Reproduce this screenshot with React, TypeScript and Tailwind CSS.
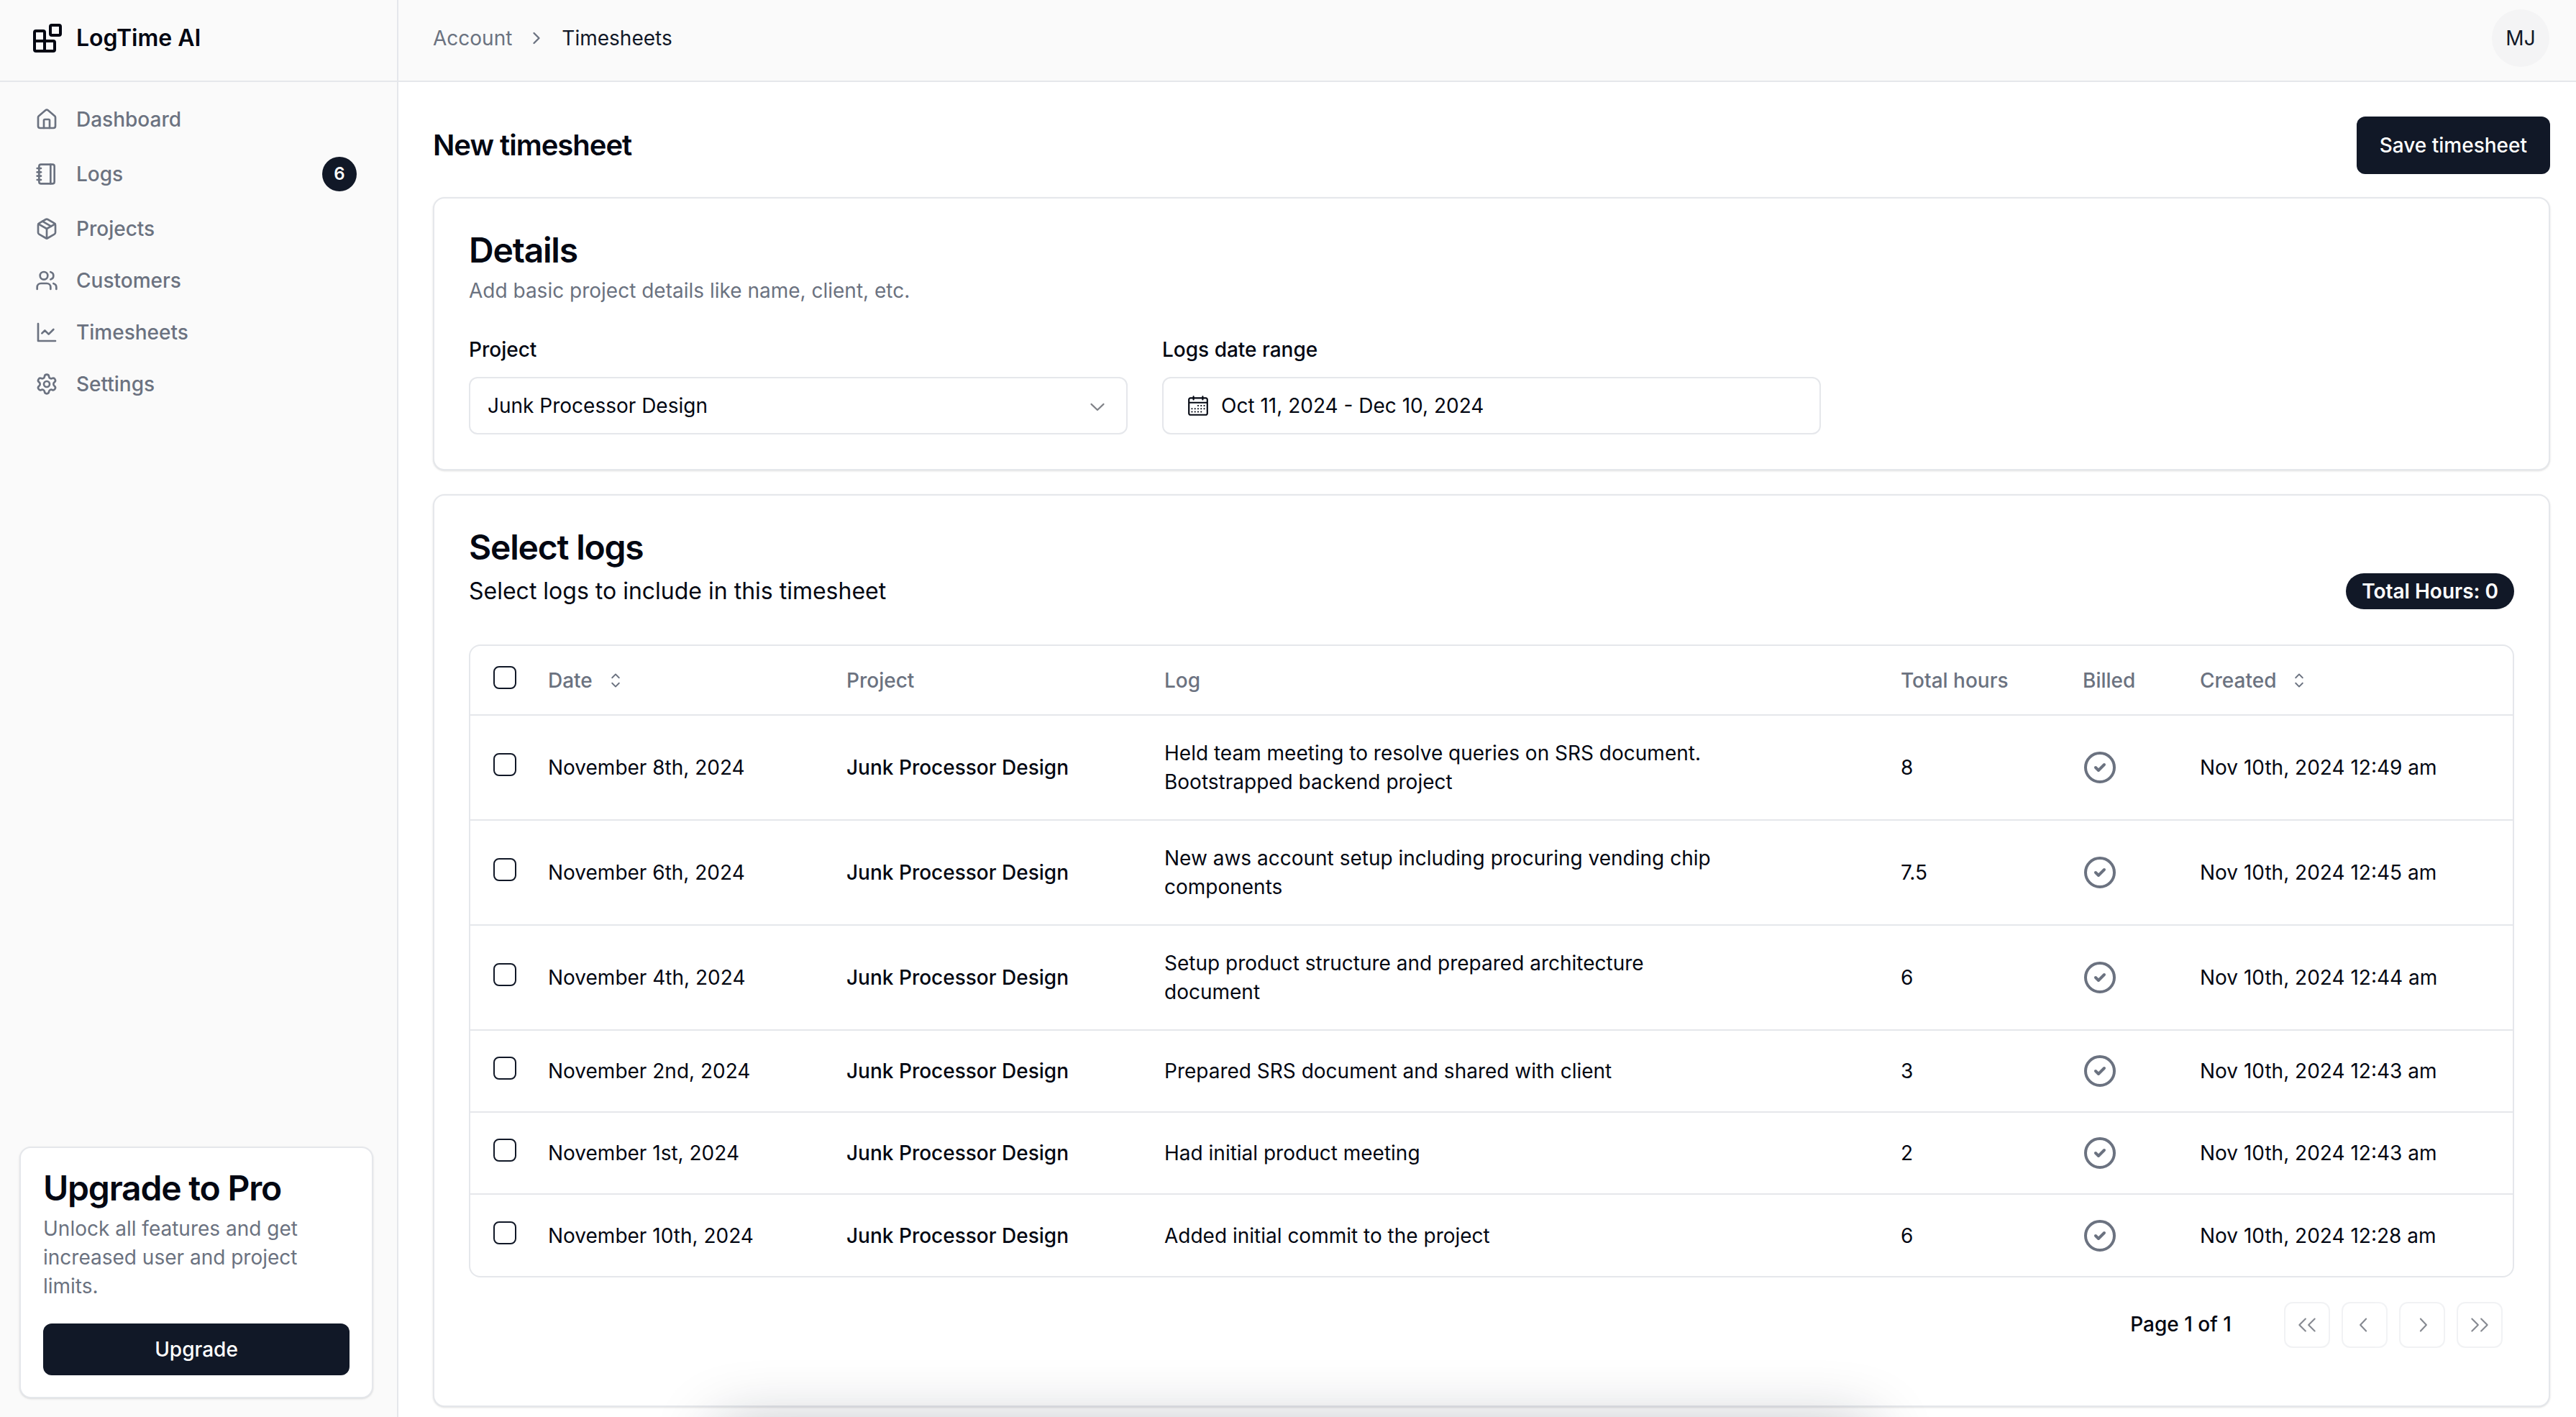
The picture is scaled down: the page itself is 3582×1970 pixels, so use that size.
import { ChevronRight, CircleCheck, House, Notebook, Package, Settings, Users } from 'lucide-react'
import { RxCalendar, RxCaretSort, RxChevronDown, RxChevronLeft, RxChevronRight, RxDoubleArrowLeft, RxDoubleArrowRight } from 'react-icons/rx'
import type { ReactNode } from 'react'

interface LogRow { date: string; log: ReactNode; hours: string; created: string; tall?: boolean }

const LOGS: LogRow[] = [
  { date: 'November 8th, 2024', log: 'Held team meeting to resolve queries on SRS document. Bootstrapped backend project', hours: '8', created: 'Nov 10th, 2024 12:49 am', tall: true },
  { date: 'November 6th, 2024', log: 'New aws account setup including procuring vending chip components', hours: '7.5', created: 'Nov 10th, 2024 12:45 am', tall: true },
  { date: 'November 4th, 2024', log: 'Setup product structure and prepared architecture document', hours: '6', created: 'Nov 10th, 2024 12:44 am', tall: true },
  { date: 'November 2nd, 2024', log: 'Prepared SRS document and shared with client', hours: '3', created: 'Nov 10th, 2024 12:43 am' },
  { date: 'November 1st, 2024', log: 'Had initial product meeting', hours: '2', created: 'Nov 10th, 2024 12:43 am' },
  { date: 'November 10th, 2024', log: 'Added initial commit to the project', hours: '6', created: 'Nov 10th, 2024 12:28 am' },
]

function BlocksLogo() {
  return (
    <svg width="48" height="48" viewBox="0 0 24 24" fill="none" stroke="currentColor" strokeWidth="2" strokeLinecap="round" strokeLinejoin="round">
      <rect x="14" y="3" width="7" height="7" rx="1" />
      <path d="M10 21V8a1 1 0 0 0-1-1H4a1 1 0 0 0-1 1v12a1 1 0 0 0 1 1h12a1 1 0 0 0 1-1v-5a1 1 0 0 0-1-1H3" />
    </svg>
  )
}

function LineChartIcon() {
  return (
    <svg width="32" height="32" viewBox="0 0 24 24" fill="none" stroke="currentColor" strokeWidth="2" strokeLinecap="round" strokeLinejoin="round">
      <path d="M3 3v18h18" />
      <path d="m19 9-5 5-4-4-3 3" />
    </svg>
  )
}

function Checkbox() {
  return <span role="checkbox" aria-checked="false" className="mb-[8px] block h-[32px] w-[32px] rounded-[8px] border-2 border-[#111827] bg-white" />
}

function PageButton({ children }: { children: ReactNode }) {
  return (
    <div className="flex h-[64px] w-[64px] items-center justify-center rounded-[12px] border-2 border-[#e5e7eb] text-[#111827] opacity-50">
      {children}
    </div>
  )
}

function NavItem({ icon, label, badge }: { icon: ReactNode; label: string; badge?: string }) {
  return (
    <div className={`flex items-center gap-[25px] pl-[49px] pr-[56px] text-[28px] font-medium text-[#6b7280] ${badge ? 'h-[80px]' : 'h-[72px]'}`}>
      {icon}
      <span>{label}</span>
      {badge && (
        <span className="ml-auto flex h-[48px] w-[48px] items-center justify-center rounded-full bg-[#111827] text-[24px] font-semibold text-white">{badge}</span>
      )}
    </div>
  )
}

export default function App() {
  return (
    <div className="relative flex h-screen overflow-hidden bg-white font-['Inter',sans-serif] text-[#030712] antialiased">
      {/* Sidebar */}
      <aside className="flex w-[554px] shrink-0 flex-col border-r-2 border-[#e5e7eb] bg-[#fafafa]">
        <div className="flex h-[114px] items-center gap-[16px] border-b-2 border-[#e5e7eb] pb-[6px] pl-[42px] text-[32px] font-semibold">
          <BlocksLogo />
          <span>LogTime AI</span>
        </div>
        <nav className="pt-[16px]">
          <NavItem icon={<House size={32} />} label="Dashboard" />
          <NavItem icon={<Notebook size={32} />} label="Logs" badge="6" />
          <NavItem icon={<Package size={32} />} label="Projects" />
          <NavItem icon={<Users size={32} />} label="Customers" />
          <NavItem icon={<LineChartIcon />} label="Timesheets" />
          <NavItem icon={<Settings size={32} />} label="Settings" />
        </nav>
        <div className="mb-[26px] ml-[27px] mr-[33px] mt-auto rounded-[16px] border-2 border-[#e5e7eb] bg-white px-[31px] pb-[30px] pt-[32px] shadow-sm">
          <h3 className="text-[48px] font-semibold leading-[48px] tracking-[-1.2px]">Upgrade to Pro</h3>
          <p className="mt-[12px] text-[28px] leading-[40px] text-[#6b7280]">Unlock all features and get increased user and project limits.</p>
          <button className="mt-[32px] h-[72px] w-full rounded-[12px] bg-[#111827] text-[28px] font-medium text-white">Upgrade</button>
        </div>
      </aside>

      {/* Main */}
      <div className="flex min-w-0 flex-1 flex-col">
        <header className="flex h-[114px] shrink-0 items-center justify-between border-b-2 border-[#e5e7eb] bg-[#fafafa] pb-[6px] pl-[48px] pr-[37px] text-[28px]">
          <div className="flex items-center">
            <span className="text-[#6b7280]">Account</span>
            <ChevronRight size={28} className="ml-[20px] mr-[21px] text-[#6b7280]" />
            <span className="text-[#111827]">Timesheets</span>
          </div>
          <div className="flex h-[80px] w-[80px] items-center justify-center rounded-full bg-[#f4f4f5] text-[#111827]">MJ</div>
        </header>

        <main className="pl-[48px] pr-[36px]">
          <div className="flex items-center justify-between pb-[32px] pt-[48px]">
            <h1 className="text-[40px] font-semibold tracking-[-1px]">New timesheet</h1>
            <button className="h-[80px] rounded-[12px] bg-[#111827] px-[32px] text-[28px] font-medium text-white">Save timesheet</button>
          </div>

          {/* Details */}
          <section className="rounded-[16px] border-2 border-[#e5e7eb] bg-white p-[48px] shadow-sm">
            <h2 className="text-[48px] font-semibold leading-[48px] tracking-[-1.2px]">Details</h2>
            <p className="mt-[12px] text-[28px] leading-[40px] text-[#6b7280]">Add basic project details like name, client, etc.</p>
            <div className="mt-[48px] grid grid-cols-3 gap-[48px]">
              <div>
                <label className="block text-[28px] font-medium leading-[28px]">Project</label>
                <div className="mt-[24px] flex h-[80px] items-center justify-between rounded-[12px] border-2 border-[#e5e7eb] pl-[24px] pr-[24px] text-[28px]">
                  <span>Junk Processor Design</span>
                  <RxChevronDown size={32} className="opacity-50" />
                </div>
              </div>
              <div>
                <label className="block text-[28px] font-medium leading-[28px]">Logs date range</label>
                <div className="mt-[24px] flex h-[80px] items-center gap-[16px] rounded-[12px] border-2 border-[#e5e7eb] pl-[32px] text-[28px]">
                  <RxCalendar size={32} />
                  <span>Oct 11, 2024 - Dec 10, 2024</span>
                </div>
              </div>
            </div>
          </section>

          {/* Select logs */}
          <section className="mt-[33px] rounded-[16px] border-2 border-[#e5e7eb] bg-white px-[48px] pb-[80px] pt-[48px] shadow-sm">
            <h2 className="text-[48px] font-semibold leading-[48px] tracking-[-1.2px]">Select logs</h2>
            <div className="mt-[12px] flex items-center justify-between">
              <p className="text-[32px] leading-[48px]">Select logs to include in this timesheet</p>
              <span className="flex h-[50px] items-center rounded-full bg-[#111827] px-[22px] text-[28px] font-semibold text-white">Total Hours: 0</span>
            </div>

            <div className="mt-[49px] overflow-hidden rounded-[16px] border-2 border-[#e5e7eb]">
              <table className="w-full table-fixed text-left text-[28px]">
                <colgroup>
                  <col className="w-[76px]" />
                  <col className="w-[415px]" />
                  <col className="w-[442px]" />
                  <col className="w-[1024px]" />
                  <col className="w-[253px]" />
                  <col className="w-[163px]" />
                  <col />
                </colgroup>
                <thead>
                  <tr className="h-[96px] border-b-2 border-[#e5e7eb] font-medium text-[#6b7280]">
                    <th className="pl-[32px]"><Checkbox /></th>
                    <th className="pl-[32px] font-medium">
                      <span className="flex items-center gap-[16px]">Date <RxCaretSort size={32} /></span>
                    </th>
                    <th className="pl-[32px] font-medium">Project</th>
                    <th className="pl-[32px] font-medium">Log</th>
                    <th className="pl-[32px] font-medium">Total hours</th>
                    <th className="pl-[32px] font-medium">Billed</th>
                    <th className="pl-[32px] font-medium">
                      <span className="flex items-center gap-[16px]">Created <RxCaretSort size={32} /></span>
                    </th>
                  </tr>
                </thead>
                <tbody>
                  {LOGS.map((row, i) => (
                    <tr key={row.date} className={`${row.tall ? 'h-[146px]' : 'h-[114px]'} ${i < LOGS.length - 1 ? 'border-b-2 border-[#e5e7eb]' : ''}`}>
                      <td className="pl-[32px]"><Checkbox /></td>
                      <td className="pl-[32px]">{row.date}</td>
                      <td className="pl-[32px] font-medium">Junk Processor Design</td>
                      <td className="pl-[32px] leading-[40px]"><div className="max-w-[780px]">{row.log}</div></td>
                      <td className="pl-[32px]">{row.hours}</td>
                      <td className="pl-[32px]"><CircleCheck size={48} className="text-[#6b7280]" /></td>
                      <td className="pl-[32px]">{row.created}</td>
                    </tr>
                  ))}
                </tbody>
              </table>
            </div>

            <div className="mt-[34px] flex items-center justify-end pr-[16px]">
              <span className="mb-[2px] mr-[73px] text-[28px] font-medium">Page 1 of 1</span>
              <div className="flex gap-[16px]">
                <PageButton><RxDoubleArrowLeft size={32} /></PageButton>
                <PageButton><RxChevronLeft size={32} /></PageButton>
                <PageButton><RxChevronRight size={32} /></PageButton>
                <PageButton><RxDoubleArrowRight size={32} /></PageButton>
              </div>
            </div>
          </section>
        </main>
      </div>

      {/* shadow of a bar that sits just below the fold */}
      <div className="absolute left-[1000px] top-[1985px] h-[100px] w-[1600px] shadow-[0_0_90px_rgba(17,24,39,0.3)]" />
    </div>
  )
}
